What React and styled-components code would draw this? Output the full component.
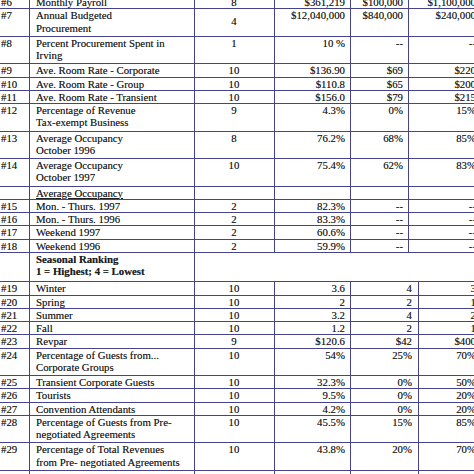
import React from 'react';
import styled, { createGlobalStyle, css } from 'styled-components';

const LINE = '#45438c';

const GlobalStyle = createGlobalStyle`
  html, body {
    margin: 0;
    padding: 0;
    background: #ffffff;
    overflow: hidden;
  }
  body {
    font-family: "Liberation Serif", "Times New Roman", serif;
  }
`;

const Page = styled.div`
  width: 474px;
  height: 474px;
  overflow: hidden;
  background: #ffffff;
`;

const Sheet = styled.div`
  width: 483px;
  margin: -5px 0 0 -3px;
`;

const Table = styled.table`
  width: 483px;
  table-layout: fixed;
  border-collapse: collapse;
  font-family: "Liberation Serif", "Times New Roman", serif;
  font-size: 10.8px;
  line-height: 12.25px;
  color: #1e1e1e;
  text-shadow: 0 0 0.3px rgba(30, 30, 30, 0.6);
`;

const Row = styled.tr`
  ${(p) =>
    p.$tall &&
    css`
      td {
        padding-bottom: ${p.$tall}px;
      }
    `}
`;

const Cell = styled.td`
  border: 1px solid ${LINE};
  padding: 0;
  vertical-align: ${(p) => p.$valign || 'top'};
  text-align: ${(p) => p.$align || 'left'};
  white-space: nowrap;
  overflow: hidden;
  ${(p) =>
    p.$open &&
    css`
      border-left: none;
      border-right: none;
    `}
`;

const NumCell = styled(Cell)`
  padding-left: 3px;
`;

const LabelCell = styled(Cell)`
  padding-left: 6px;
  font-weight: ${(p) => (p.$bold ? 700 : 400)};
`;

const WeightCell = styled(Cell)`
  text-align: center;
  padding-right: 1px;
`;

const ValueCell = styled(Cell)`
  text-align: right;
  padding-right: ${(p) => p.$pr || 5}px;
`;

const Underlined = styled.span`
  text-decoration: underline;
`;

const upper = [
  { n: '#6', label: ['Monthly Payroll'], w: '8', v: '$361,219', lo: '$100,000', hi: '$1,100,000' },
  { n: '#7', label: ['Annual Budgeted', 'Procurement'], w: '4', v: '$12,040,000', lo: '$840,000', hi: '$240,000', tall: 2, mid: true },
  { n: '#8', label: ['Percent Procurement Spent in', 'Irving'], w: '1', v: '10 %', lo: '--', hi: '--', tall: 2 },
  { n: '#9', label: ['Ave. Room Rate - Corporate'], w: '10', v: '$136.90', lo: '$69', hi: '$220' },
  { n: '#10', label: ['Ave. Room Rate - Group'], w: '10', v: '$110.8', lo: '$65', hi: '$200' },
  { n: '#11', label: ['Ave. Room Rate - Transient'], w: '10', v: '$156.0', lo: '$79', hi: '$215' },
  { n: '#12', label: ['Percentage of Revenue', 'Tax-exempt Business'], w: '9', v: '4.3%', lo: '0%', hi: '15%', tall: 2 },
  { n: '#13', label: ['Average Occupancy', 'October 1996'], w: '8', v: '76.2%', lo: '68%', hi: '85%', tall: 2 },
  { n: '#14', label: ['Average Occupancy', 'October 1997'], w: '10', v: '75.4%', lo: '62%', hi: '83%', tall: 2 },
  { n: '', label: ['Average Occupancy'], underline: true, w: '', v: '', lo: '', hi: '' },
  { n: '#15', label: ['Mon. - Thurs. 1997'], w: '2', v: '82.3%', lo: '--', hi: '--' },
  { n: '#16', label: ['Mon. - Thurs. 1996'], w: '2', v: '83.3%', lo: '--', hi: '--' },
  { n: '#17', label: ['Weekend 1997'], w: '2', v: '60.6%', lo: '--', hi: '--' },
  { n: '#18', label: ['Weekend 1996'], w: '2', v: '59.9%', lo: '--', hi: '--' },
];

const lower = [
  { n: '#19', label: ['Winter'], w: '10', v: '3.6', lo: '4', hi: '3' },
  { n: '#20', label: ['Spring'], w: '10', v: '2', lo: '2', hi: '1' },
  { n: '#21', label: ['Summer'], w: '10', v: '3.2', lo: '4', hi: '2' },
  { n: '#22', label: ['Fall'], w: '10', v: '1.2', lo: '2', hi: '1' },
  { n: '#23', label: ['Revpar'], w: '9', v: '$120.6', lo: '$42', hi: '$400' },
  { n: '#24', label: ['Percentage of Guests from...', 'Corporate Groups'], w: '10', v: '54%', lo: '25%', hi: '70%', tall: 2 },
  { n: '#25', label: ['Transient Corporate Guests'], w: '10', v: '32.3%', lo: '0%', hi: '50%' },
  { n: '#26', label: ['Tourists'], w: '10', v: '9.5%', lo: '0%', hi: '20%' },
  { n: '#27', label: ['Convention Attendants'], w: '10', v: '4.2%', lo: '0%', hi: '20%' },
  { n: '#28', label: ['Percentage of Guests from Pre-', 'negotiated Agreements'], w: '10', v: '45.5%', lo: '15%', hi: '85%', tall: 2 },
  { n: '#29', label: ['Percentage of Total Revenues', 'from Pre- negotiated Agreements'], w: '10', v: '43.8%', lo: '20%', hi: '70%', tall: 2 },
  { n: '#30', label: ['Did the above Agreements include', 'any other'], w: '10', v: '1.1', lo: '', hi: '' },
];

const Lines = ({ lines }) =>
  lines.map((l, i) => (
    <React.Fragment key={i}>
      {i > 0 && <br />}
      {l}
    </React.Fragment>
  ));

const Label = ({ row }) => (
  <LabelCell>
    {row.underline ? (
      <Underlined>
        <Lines lines={row.label} />
      </Underlined>
    ) : (
      <Lines lines={row.label} />
    )}
  </LabelCell>
);

export default function App() {
  return (
    <Page>
      <GlobalStyle />
      <Sheet>
        <Table>
          <colgroup>
            <col style={{ width: 32 }} />
            <col style={{ width: 165 }} />
            <col style={{ width: 80 }} />
            <col style={{ width: 76 }} />
            <col style={{ width: 58 }} />
            <col style={{ width: 10 }} />
            <col style={{ width: 62 }} />
          </colgroup>
          <tbody>
            {upper.map((r, i) => (
              <Row key={i} $tall={r.tall}>
                <NumCell>{r.n}</NumCell>
                <Label row={r} />
                <WeightCell $valign={r.mid ? 'middle' : 'top'}>{r.w}</WeightCell>
                <ValueCell>{r.v}</ValueCell>
                <ValueCell>{r.lo}</ValueCell>
                <ValueCell colSpan={2} $pr={4}>{r.hi}</ValueCell>
              </Row>
            ))}
            <Row $tall={4}>
              <NumCell />
              <LabelCell $bold>
                Seasonal Ranking
                <br />1 = Highest; 4 = Lowest
              </LabelCell>
              <WeightCell $open />
              <ValueCell $open />
              <ValueCell $open colSpan={2} />
              <ValueCell $open />
            </Row>
            {lower.map((r, i) => (
              <Row key={i} $tall={r.tall}>
                <NumCell>{r.n}</NumCell>
                <Label row={r} />
                <WeightCell>{r.w}</WeightCell>
                <ValueCell>{r.v}</ValueCell>
                <ValueCell colSpan={2} $pr={6}>{r.lo}</ValueCell>
                <ValueCell $pr={4}>{r.hi}</ValueCell>
              </Row>
            ))}
          </tbody>
        </Table>
      </Sheet>
    </Page>
  );
}
